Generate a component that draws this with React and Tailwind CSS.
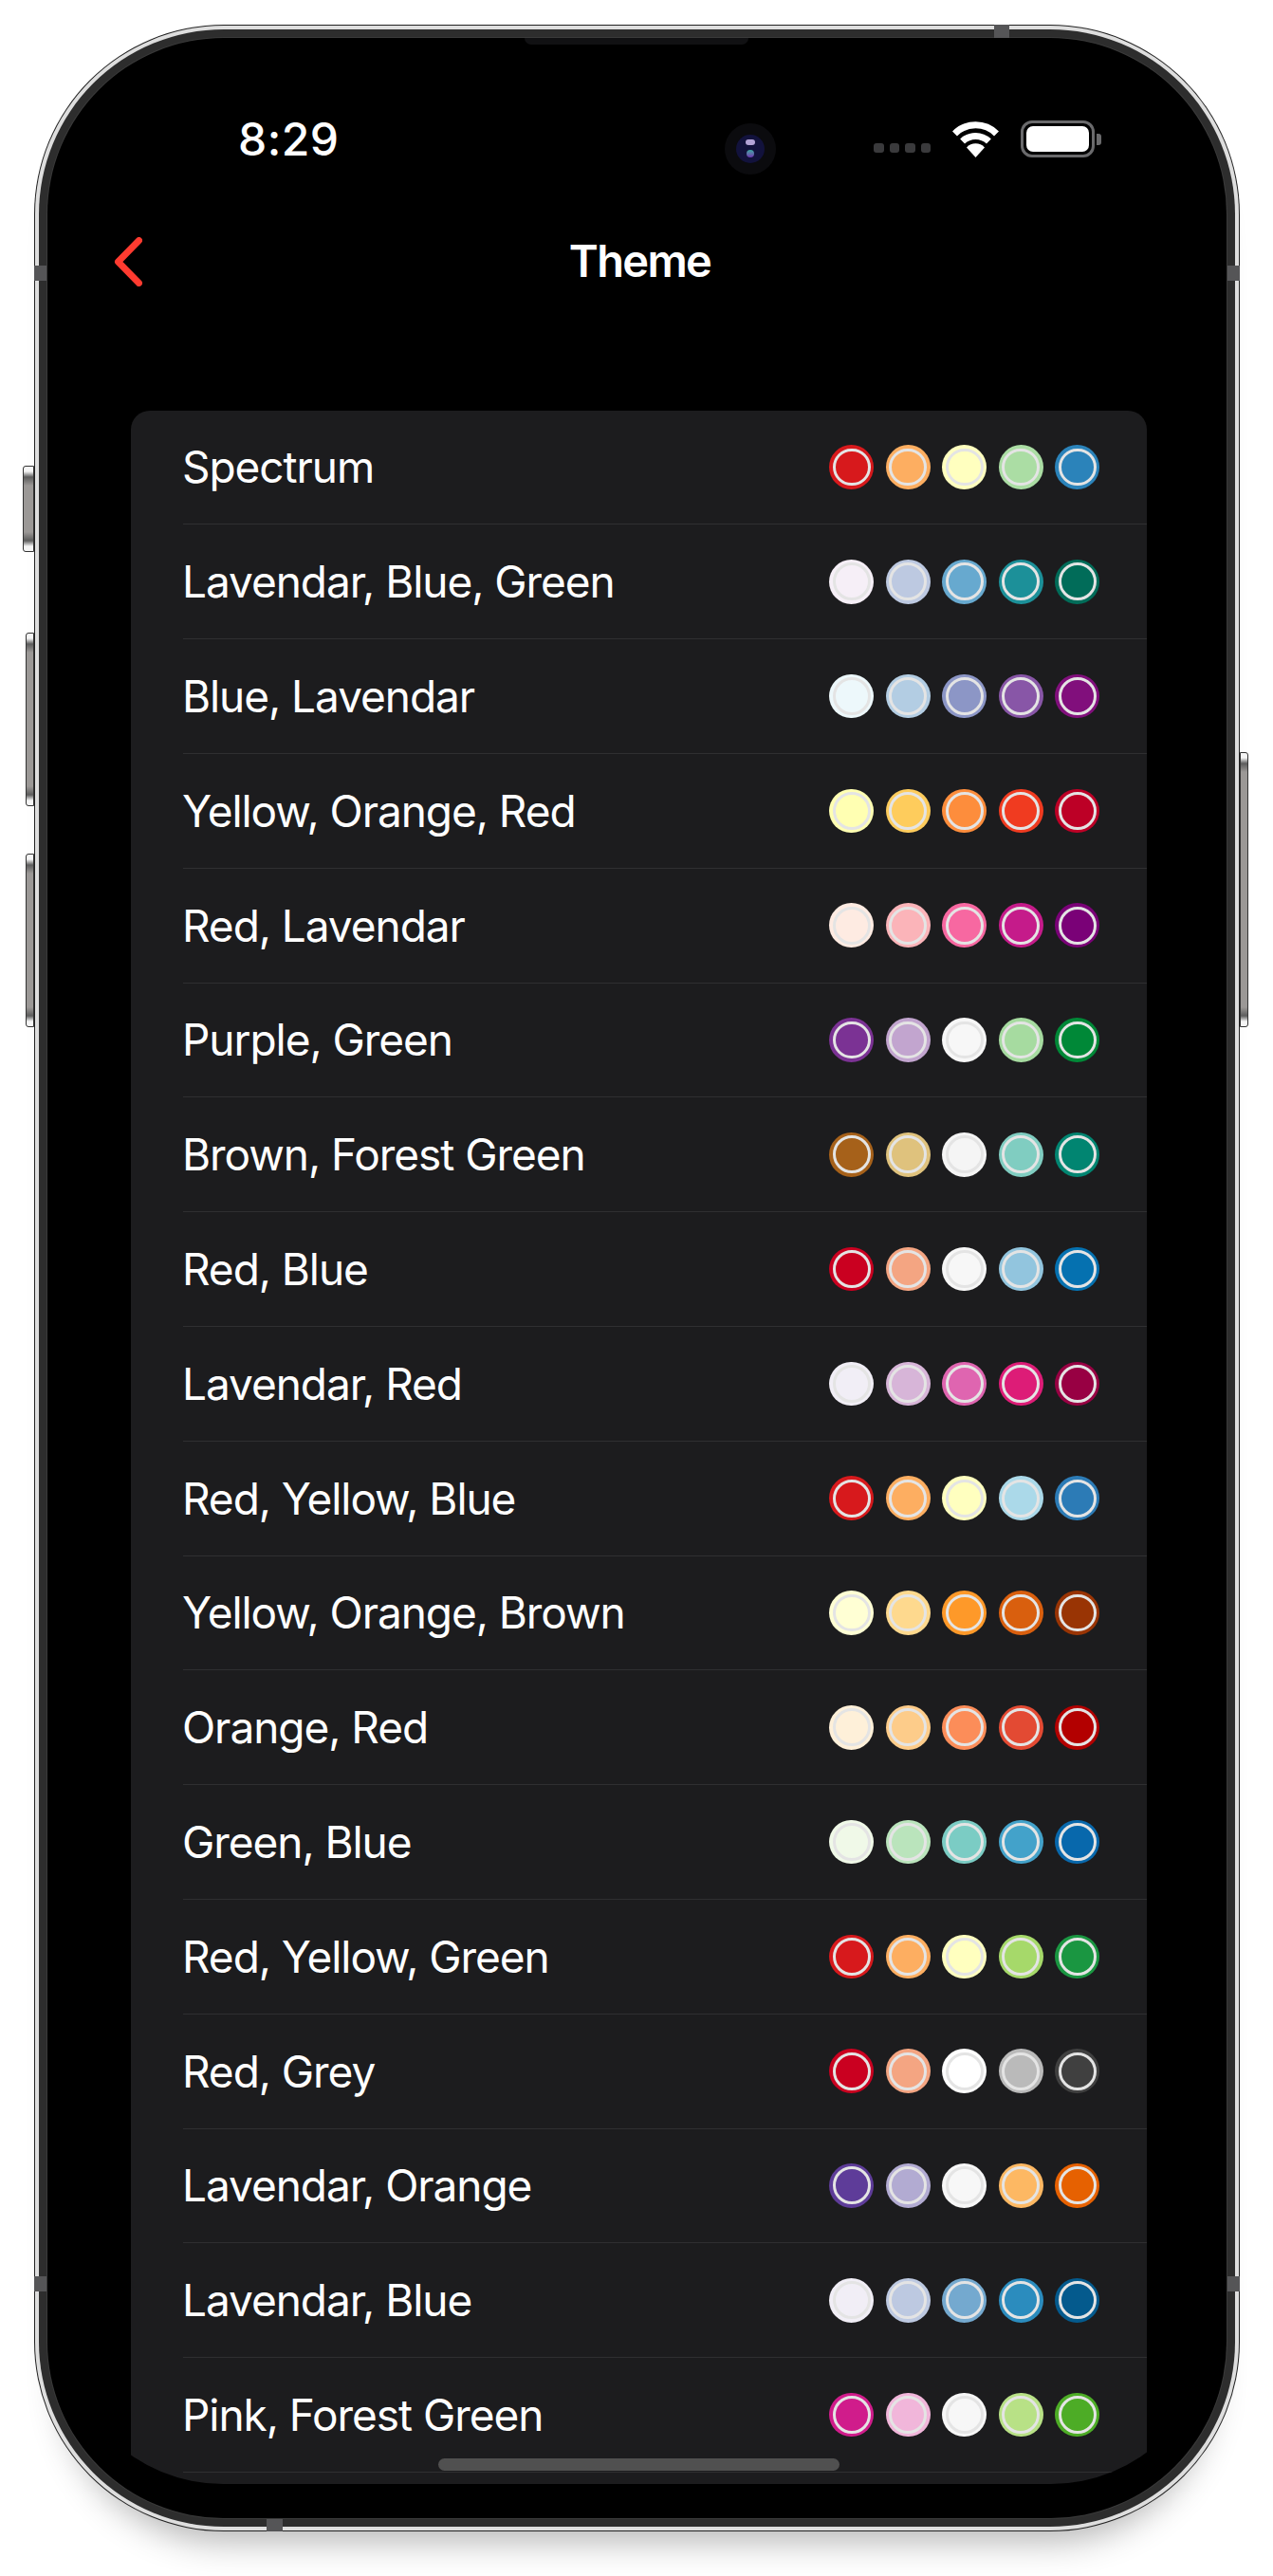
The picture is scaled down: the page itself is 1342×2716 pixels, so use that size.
const themes = [
  { name: "Spectrum", colors: ["bg-[#d7191c]", "bg-[#fdae61]", "bg-[#ffffbf]", "bg-[#abdda4]", "bg-[#2b83ba]"] },
  { name: "Lavendar, Blue, Green", colors: ["bg-[#f6eff7]", "bg-[#bdc9e1]", "bg-[#67a9cf]", "bg-[#1c9099]", "bg-[#016c59]"] },
  { name: "Blue, Lavendar", colors: ["bg-[#edf8fb]", "bg-[#b3cde3]", "bg-[#8c96c6]", "bg-[#8856a7]", "bg-[#810f7c]"] },
  { name: "Yellow, Orange, Red", colors: ["bg-[#ffffb2]", "bg-[#fecc5c]", "bg-[#fd8d3c]", "bg-[#f03b20]", "bg-[#bd0026]"] },
  { name: "Red, Lavendar", colors: ["bg-[#feebe2]", "bg-[#fbb4b9]", "bg-[#f768a1]", "bg-[#c51b8a]", "bg-[#7a0177]"] },
  { name: "Purple, Green", colors: ["bg-[#7b3294]", "bg-[#c2a5cf]", "bg-[#f7f7f7]", "bg-[#a6dba0]", "bg-[#008837]"] },
  { name: "Brown, Forest Green", colors: ["bg-[#a6611a]", "bg-[#dfc27d]", "bg-[#f5f5f5]", "bg-[#80cdc1]", "bg-[#018571]"] },
  { name: "Red, Blue", colors: ["bg-[#ca0020]", "bg-[#f4a582]", "bg-[#f7f7f7]", "bg-[#92c5de]", "bg-[#0571b0]"] },
  { name: "Lavendar, Red", colors: ["bg-[#f1eef6]", "bg-[#d7b5d8]", "bg-[#df65b0]", "bg-[#dd1c77]", "bg-[#980043]"] },
  { name: "Red, Yellow, Blue", colors: ["bg-[#d7191c]", "bg-[#fdae61]", "bg-[#ffffbf]", "bg-[#abd9e9]", "bg-[#2c7bb6]"] },
  { name: "Yellow, Orange, Brown", colors: ["bg-[#ffffd4]", "bg-[#fed98e]", "bg-[#fe9929]", "bg-[#d95f0e]", "bg-[#993404]"] },
  { name: "Orange, Red", colors: ["bg-[#fef0d9]", "bg-[#fdcc8a]", "bg-[#fc8d59]", "bg-[#e34a33]", "bg-[#b30000]"] },
  { name: "Green, Blue", colors: ["bg-[#f0f9e8]", "bg-[#bae4bc]", "bg-[#7bccc4]", "bg-[#43a2ca]", "bg-[#0868ac]"] },
  { name: "Red, Yellow, Green", colors: ["bg-[#d7191c]", "bg-[#fdae61]", "bg-[#ffffbf]", "bg-[#a6d96a]", "bg-[#1a9641]"] },
  { name: "Red, Grey", colors: ["bg-[#ca0020]", "bg-[#f4a582]", "bg-[#ffffff]", "bg-[#bababa]", "bg-[#404040]"] },
  { name: "Lavendar, Orange", colors: ["bg-[#5e3c99]", "bg-[#b2abd2]", "bg-[#f7f7f7]", "bg-[#fdb863]", "bg-[#e66101]"] },
  { name: "Lavendar, Blue", colors: ["bg-[#f1eef6]", "bg-[#bdc9e1]", "bg-[#74a9cf]", "bg-[#2b8cbe]", "bg-[#045a8d]"] },
  { name: "Pink, Forest Green", colors: ["bg-[#d01c8b]", "bg-[#f1b6da]", "bg-[#f7f7f7]", "bg-[#b8e186]", "bg-[#4dac26]"] },
];

function Swatch({ color }) {
  return (
    <div className={`w-[46.7px] h-[46.7px] rounded-full p-[3.4px] ${color}`}>
      <div className="w-full h-full rounded-full border-[3px] border-[#e4e4e4]" />
    </div>
  );
}

function ThemeRow({ theme }) {
  return (
    <div className="h-[120.8px] ml-[55px] flex items-center justify-between border-b-[1.5px] border-[#2f2f31] pr-[50px]">
      <span className="-ml-px text-[46px] leading-none tracking-[-0.023em] text-white">{theme.name}</span>
      <div className="flex gap-[12.8px]">
        {theme.colors.map((c) => (
          <Swatch key={c} color={c} />
        ))}
      </div>
    </div>
  );
}

function Wifi() {
  return (
    <svg width="53" height="39" viewBox="0 0 53 39" fill="none">
      <path d="M4.5 14 A31 31 0 0 1 48.5 14" stroke="white" strokeWidth="7" />
      <path d="M12.6 22 A20 20 0 0 1 40.4 22" stroke="white" strokeWidth="7" />
      <path d="M26.5 39 L17 28.5 A13 13 0 0 1 36 28.5 Z" fill="white" />
    </svg>
  );
}

function SideButton({ className }) {
  return (
    <div className={`absolute border border-[#333] bg-[linear-gradient(to_bottom,#f5f5f5_0,#f5f5f5_5px,#5c5c5c_11px,#9b9896_20px,#9b9896_calc(100%-20px),#5c5c5c_calc(100%-11px),#f5f5f5_calc(100%-5px),#f5f5f5_100%)] ${className}`} />
  );
}

function Band({ className }) {
  return <div className={`absolute bg-[#555557] ${className}`} />;
}

export default function App() {
  return (
    <div className="w-[1342px] h-[2716px] bg-white overflow-hidden pt-[26px] pl-[36px] font-['Inter',sans-serif]">
      <div className="relative w-[1271px] h-[2643px] rounded-[200px] bg-[#222] p-px shadow-[0_40px_36px_-30px_rgba(0,0,0,0.3)]">
        <SideButton className="left-[-12px] top-[465px] w-[12px] h-[91px] rounded-l-[3px]" />
        <SideButton className="left-[-9px] top-[641px] w-[9px] h-[183px] rounded-l-[3px]" />
        <SideButton className="left-[-9px] top-[874px] w-[9px] h-[183px] rounded-l-[3px]" />
        <SideButton className="right-[-9px] top-[767px] w-[9px] h-[290px] rounded-r-[3px]" />

        <div className="h-full rounded-[199px] bg-[#dedede] p-[4px]">
          <div className="h-full rounded-[195px] bg-[#2d2d2d] p-[9px]">
            <div className="relative h-full rounded-[186px] bg-black ring-1 ring-[#3a3a3a] px-[15px] pb-[36px]">
              <div className="h-full rounded-b-[170px] overflow-hidden flex flex-col">
                {/* status bar */}
                <div className="shrink-0 mt-[87px] h-[39px] flex items-center justify-end pr-[117px]">
                  <span className="mr-auto ml-[186px] text-[48px] leading-none font-medium tracking-[0.01em] text-white">8:29</span>
                  <div className="flex gap-[6px] mt-[19px] mr-[21px]">
                    <div className="w-[10.5px] h-[10.5px] rounded-[3px] bg-[#3a3a3c]" />
                    <div className="w-[10.5px] h-[10.5px] rounded-[3px] bg-[#3a3a3c]" />
                    <div className="w-[10.5px] h-[10.5px] rounded-[3px] bg-[#3a3a3c]" />
                    <div className="w-[10.5px] h-[10.5px] rounded-[3px] bg-[#3a3a3c]" />
                  </div>
                  <Wifi />
                  <div className="flex items-center ml-[21px]">
                    <div className="w-[78px] h-[39px] rounded-[12px] border-[3px] border-[#6a6a6c] p-[3px]">
                      <div className="w-full h-full rounded-[7px] bg-white" />
                    </div>
                    <div className="ml-[2px] w-[5px] h-[12px] rounded-r-[3px] bg-[#6a6a6c]" />
                  </div>
                </div>

                {/* nav bar */}
                <div className="shrink-0 mt-[84px] h-[51px] grid grid-cols-[1fr_auto_1fr] items-center">
                  <svg className="ml-[55px]" width="30" height="52" viewBox="0 0 30 52" fill="none">
                    <path d="M26.5 3.5 L4.5 26 L26.5 48.5" stroke="#ff3b30" strokeWidth="7" strokeLinecap="round" strokeLinejoin="round" />
                  </svg>
                  <span className="pl-[6px] -mt-[3px] text-[47px] leading-none font-semibold tracking-[-0.035em] text-white">Theme</span>
                  <div />
                </div>

                {/* list */}
                <div className="flex-1 mt-[131.6px] ml-[73px] mr-[69px] rounded-t-[20px] bg-[#1c1c1e]">
                  {themes.map((t) => (
                    <ThemeRow key={t.name} theme={t} />
                  ))}
                </div>
              </div>

              {/* camera + sensor housing, home indicator */}
              <div className="absolute left-[714px] top-[90px] w-[54px] h-[54px] rounded-full bg-[#0b0b0e] flex items-center justify-center">
                <div className="relative w-[30px] h-[30px] rounded-full bg-[#12123c]">
                  <div className="absolute left-[10px] top-[5px] w-[10px] h-[6px] rounded-full bg-[#b3a3d6]" />
                  <div className="absolute left-[11px] top-[16px] w-[8px] h-[8px] rounded-full bg-gradient-to-b from-[#2fa5a0] to-[#6a2fb0]" />
                </div>
              </div>
              <div className="absolute left-[503px] top-0 w-[236px] h-[7px] rounded-b-[8px] bg-[#111113]" />
              <div className="absolute left-[412px] top-[2552px] w-[423px] h-[13px] rounded-full bg-[#505050]" />
            </div>
          </div>
        </div>

        {/* antenna bands */}
        <Band className="left-[1012px] top-0 w-[16px] h-[14px]" />
        <Band className="left-0 top-[254px] w-[13px] h-[16px]" />
        <Band className="right-0 top-[254px] w-[13px] h-[16px]" />
        <Band className="left-0 top-[2374px] w-[13px] h-[16px]" />
        <Band className="right-0 top-[2374px] w-[13px] h-[16px]" />
        <Band className="left-[245px] bottom-0 w-[17px] h-[13px]" />
      </div>
    </div>
  );
}
